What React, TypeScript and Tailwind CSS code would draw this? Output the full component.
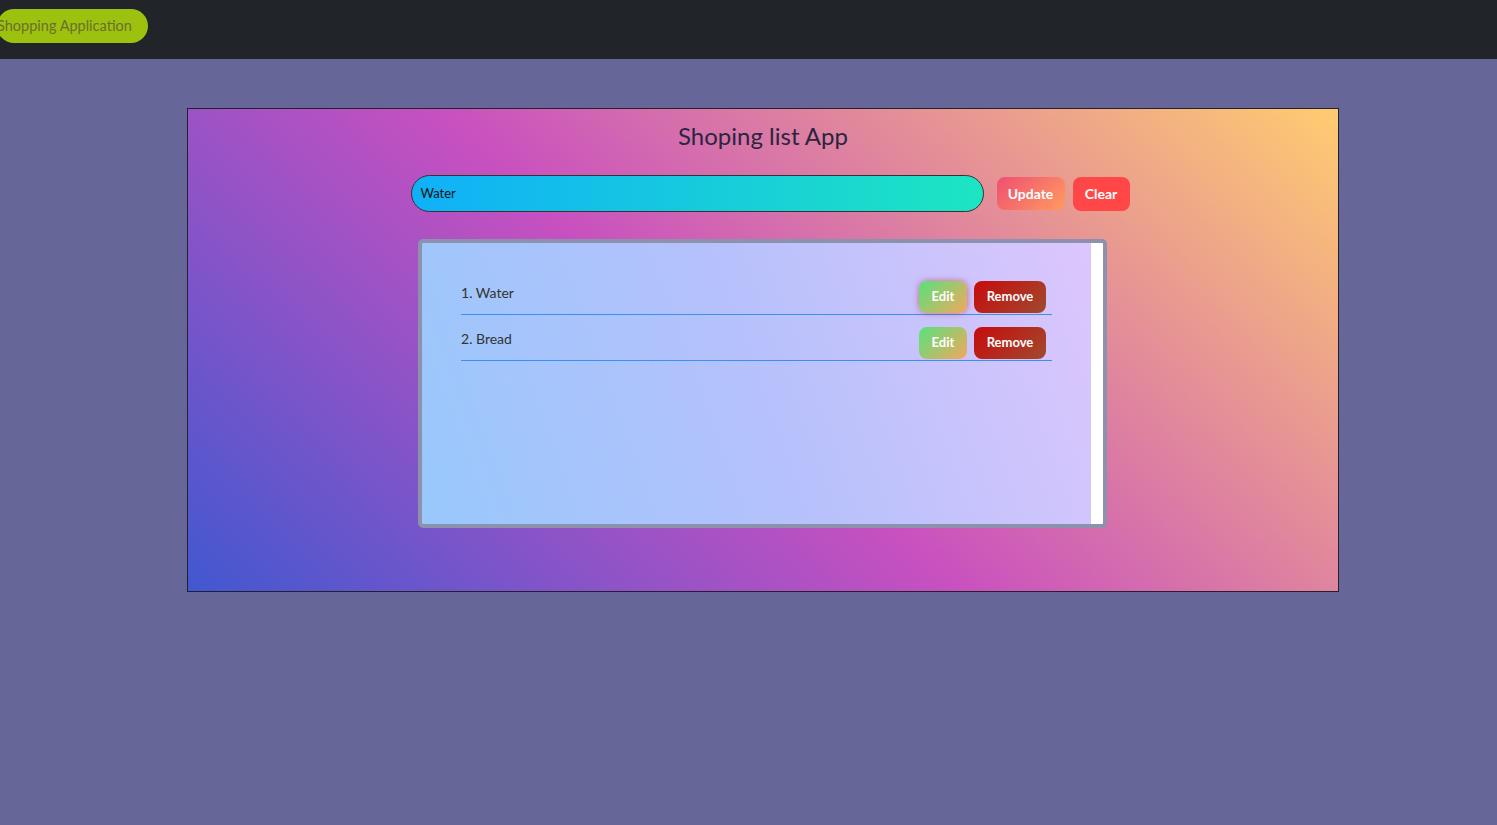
const items = ['Water', 'Bread'];

export default function App() {
  return (
    <div className="min-h-[825px] bg-[#666699] font-['Lato','Open_Sans',sans-serif]">
      {/* Navbar */}
      <nav className="h-[59px] bg-[#212529] flex items-start pt-[9px] overflow-hidden">
        <div className="-ml-[3px] h-[34px] flex items-center pr-4 rounded-full bg-[#9cc20f] text-[14.5px] text-[#6b6f2a]">
          Shopping Application
        </div>
      </nav>

      {/* Card */}
      <div className="pt-[49px] px-[187px]">
        <div className="h-[484px] w-[1152px] border border-[#23202c] bg-[linear-gradient(43deg,#4158D0_0%,#C850C0_46%,#FFCC70_100%)] flex flex-col items-center">
          <h1 className="mt-[12px] text-[24px] leading-[30px] text-[#2c2440]">Shoping list App</h1>

          <div className="mt-[24px] ml-[14px] flex items-center">
            <div className="w-[573px] h-[37px] rounded-full border border-[#333] bg-[linear-gradient(to_right,#10b0f8,#1de5c2)] flex items-center pl-[9px] text-[13px] text-[#111]">
              Water
            </div>
            <button className="ml-[13px] w-[68px] h-[33px] rounded-lg bg-[linear-gradient(135deg,#ef4f72,#ff9b60)] text-white font-bold text-[14px]">
              Update
            </button>
            <button className="ml-[8px] w-[57px] h-[34px] rounded-lg bg-[#ff4747] text-white font-bold text-[14px]">
              Clear
            </button>
          </div>

          <div className="mt-[27px] ml-[-1px] w-[689px] h-[289px] rounded-[5px] border-4 border-[#8c91ae] flex overflow-hidden">
            <div className="flex-1 bg-[linear-gradient(70deg,#98c8fc_0%,#b6c1fb_50%,#dcc6fd_100%)] pt-[26px] pl-[39px] pr-[39px]">
              {items.map((item, i) => (
                <div key={item}>
                  <div className="flex items-end justify-between h-[45px] pb-[1px]">
                    <span className="mb-[10px] text-[14px] leading-[20px] text-[#333]">
                      {i + 1}. {item}
                    </span>
                    <div className="flex items-center gap-[7px] mr-[6px]">
                      <button
                        className={
                          'w-[48px] h-[32px] rounded-lg bg-[linear-gradient(135deg,#57e27b,#f3a75e)] text-white font-bold text-[13px] ' +
                          (i === 0 ? 'shadow-[0_0_6px_rgba(200,60,90,0.7)]' : '')
                        }
                      >
                        Edit
                      </button>
                      <button className="w-[72px] h-[32px] rounded-lg bg-[linear-gradient(135deg,#c70b0b,#a04a30)] text-white font-bold text-[13px]">
                        Remove
                      </button>
                    </div>
                  </div>
                  <div className="h-px bg-[#3b8ff0]" />
                </div>
              ))}
            </div>
            <div className="w-[12px] bg-white" />
          </div>
        </div>
      </div>
    </div>
  );
}
